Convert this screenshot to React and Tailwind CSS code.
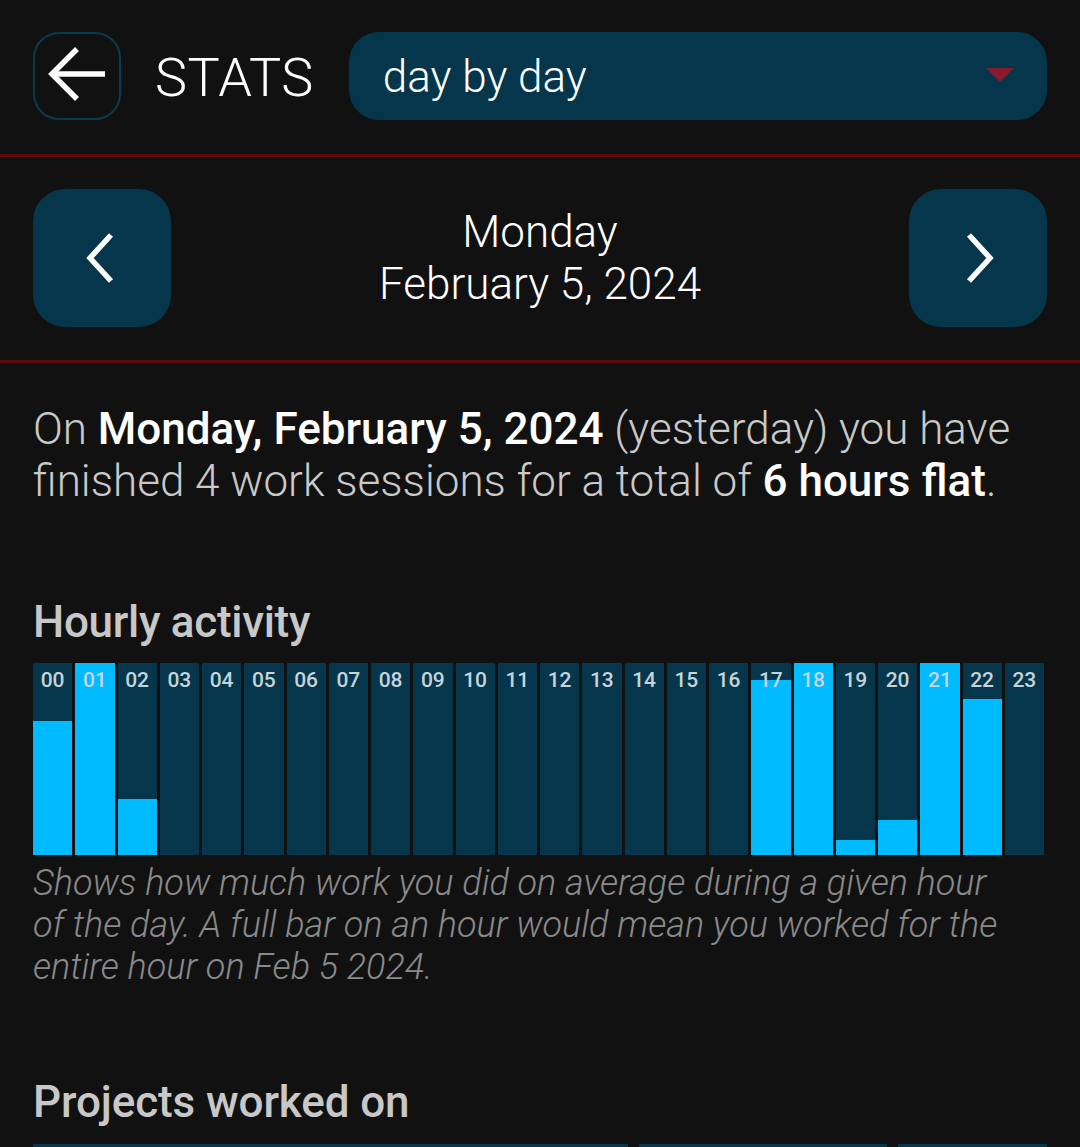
import React from "react";

const bars = [0.7, 1, 0.29, 0, 0, 0, 0, 0, 0, 0, 0, 0, 0, 0, 0, 0, 0, 0.91, 1, 0.08, 0.18, 1, 0.81, 0];

export default function App() {
  return (
    <div
      className="w-[1080px] h-[1147px] overflow-hidden bg-[#111111] text-white"
      style={{ fontFamily: "Roboto, 'Noto Sans', sans-serif" }}
    >
      {/* Header */}
      <div className="flex items-center pt-[32px] pl-[33px] pr-[33px]">
        <div className="w-[88px] h-[88px] rounded-[26px] border-2 border-[#0b3a4e] flex items-center justify-center shrink-0">
          <svg width="64" height="64" viewBox="0 0 64 64" fill="none" stroke="white" strokeWidth="5.5" strokeLinecap="butt" strokeLinejoin="miter">
            <path d="M60 30 H8" />
            <path d="M32 5 L7 30 L32 55" />
          </svg>
        </div>
        <div className="ml-[34px] text-[54px] font-light leading-none tracking-[0.5px] text-white relative top-[2px]">STATS</div>
        <div className="ml-[35px] flex-1 h-[88px] rounded-[30px] bg-[#05364b] flex items-center justify-between pl-[34px] pr-[33px]">
          <span className="text-[44px] font-light leading-none text-white relative top-[1px]">day by day</span>
          <svg width="28" height="15" viewBox="0 0 28 15" className="relative top-[-1px]">
            <polygon points="0,0 28,0 14,14" fill="#8a1a2b" />
          </svg>
        </div>
      </div>

      <div className="mt-[34px] h-[3px] bg-[#5e0a0a]" />

      {/* Date nav */}
      <div className="flex items-center justify-between px-[33px] mt-[32px]">
        <div className="w-[138px] h-[138px] rounded-[32px] bg-[#05364b] flex items-center justify-center">
          <svg width="40" height="52" viewBox="0 0 40 52" fill="none" stroke="white" strokeWidth="5.5">
            <path d="M29 3 L8 26 L29 49" />
          </svg>
        </div>
        <div className="text-center font-light text-[44px] leading-[52px] text-white">
          <div>Monday</div>
          <div>February 5, 2024</div>
        </div>
        <div className="w-[138px] h-[138px] rounded-[32px] bg-[#05364b] flex items-center justify-center">
          <svg width="40" height="52" viewBox="0 0 40 52" fill="none" stroke="white" strokeWidth="5.5">
            <path d="M11 3 L32 26 L11 49" />
          </svg>
        </div>
      </div>

      <div className="mt-[33px] h-[3px] bg-[#5e0a0a]" />

      {/* Summary */}
      <p className="px-[33px] mt-[40px] text-[44px] leading-[52px] font-light text-[#c9c9c9]">
        On <span className="font-medium text-white">Monday, February 5, 2024</span> (yesterday) you have finished 4 work sessions for a total of{" "}
        <span className="font-medium text-white">6 hours flat</span>.
      </p>

      {/* Hourly activity */}
      <h2 className="px-[33px] mt-[90px] text-[44px] leading-[50px] font-medium text-[#c8c8c8] tracking-[-0.3px]">Hourly activity</h2>

      <div className="mx-[33px] mt-[16px] w-[1011px] h-[192px] flex gap-[3px]">
        {bars.map((v, i) => (
          <div key={i} className="relative flex-1 h-full bg-[#05364b]">
            <div className="absolute left-0 right-0 bottom-0 bg-[#00bbff]" style={{ height: `${v * 100}%` }} />
            <div className="absolute left-0 right-0 top-[5px] text-center text-[21px] leading-[24px] font-medium text-[#c5d3da]">
              {String(i).padStart(2, "0")}
            </div>
          </div>
        ))}
      </div>

      <p className="pl-[33px] pr-[70px] mt-[7px] text-[36px] leading-[42px] font-light italic text-[#8a8a8a]">
        Shows how much work you did on average during a given hour of the day. A full bar on an hour would mean you worked for the entire hour on Feb 5 2024.
      </p>

      <h2 className="px-[33px] mt-[89px] text-[44px] leading-[50px] font-medium text-[#c8c8c8] tracking-[-0.1px]">Projects worked on</h2>

      <div className="mx-[33px] mt-[17px] flex gap-[11px] h-[40px] w-[1014px]">
        <div className="w-[595px] bg-[#05364b]" />
        <div className="w-[248px] bg-[#05364b]" />
        <div className="flex-1 bg-[#05364b]" />
      </div>
    </div>
  );
}
